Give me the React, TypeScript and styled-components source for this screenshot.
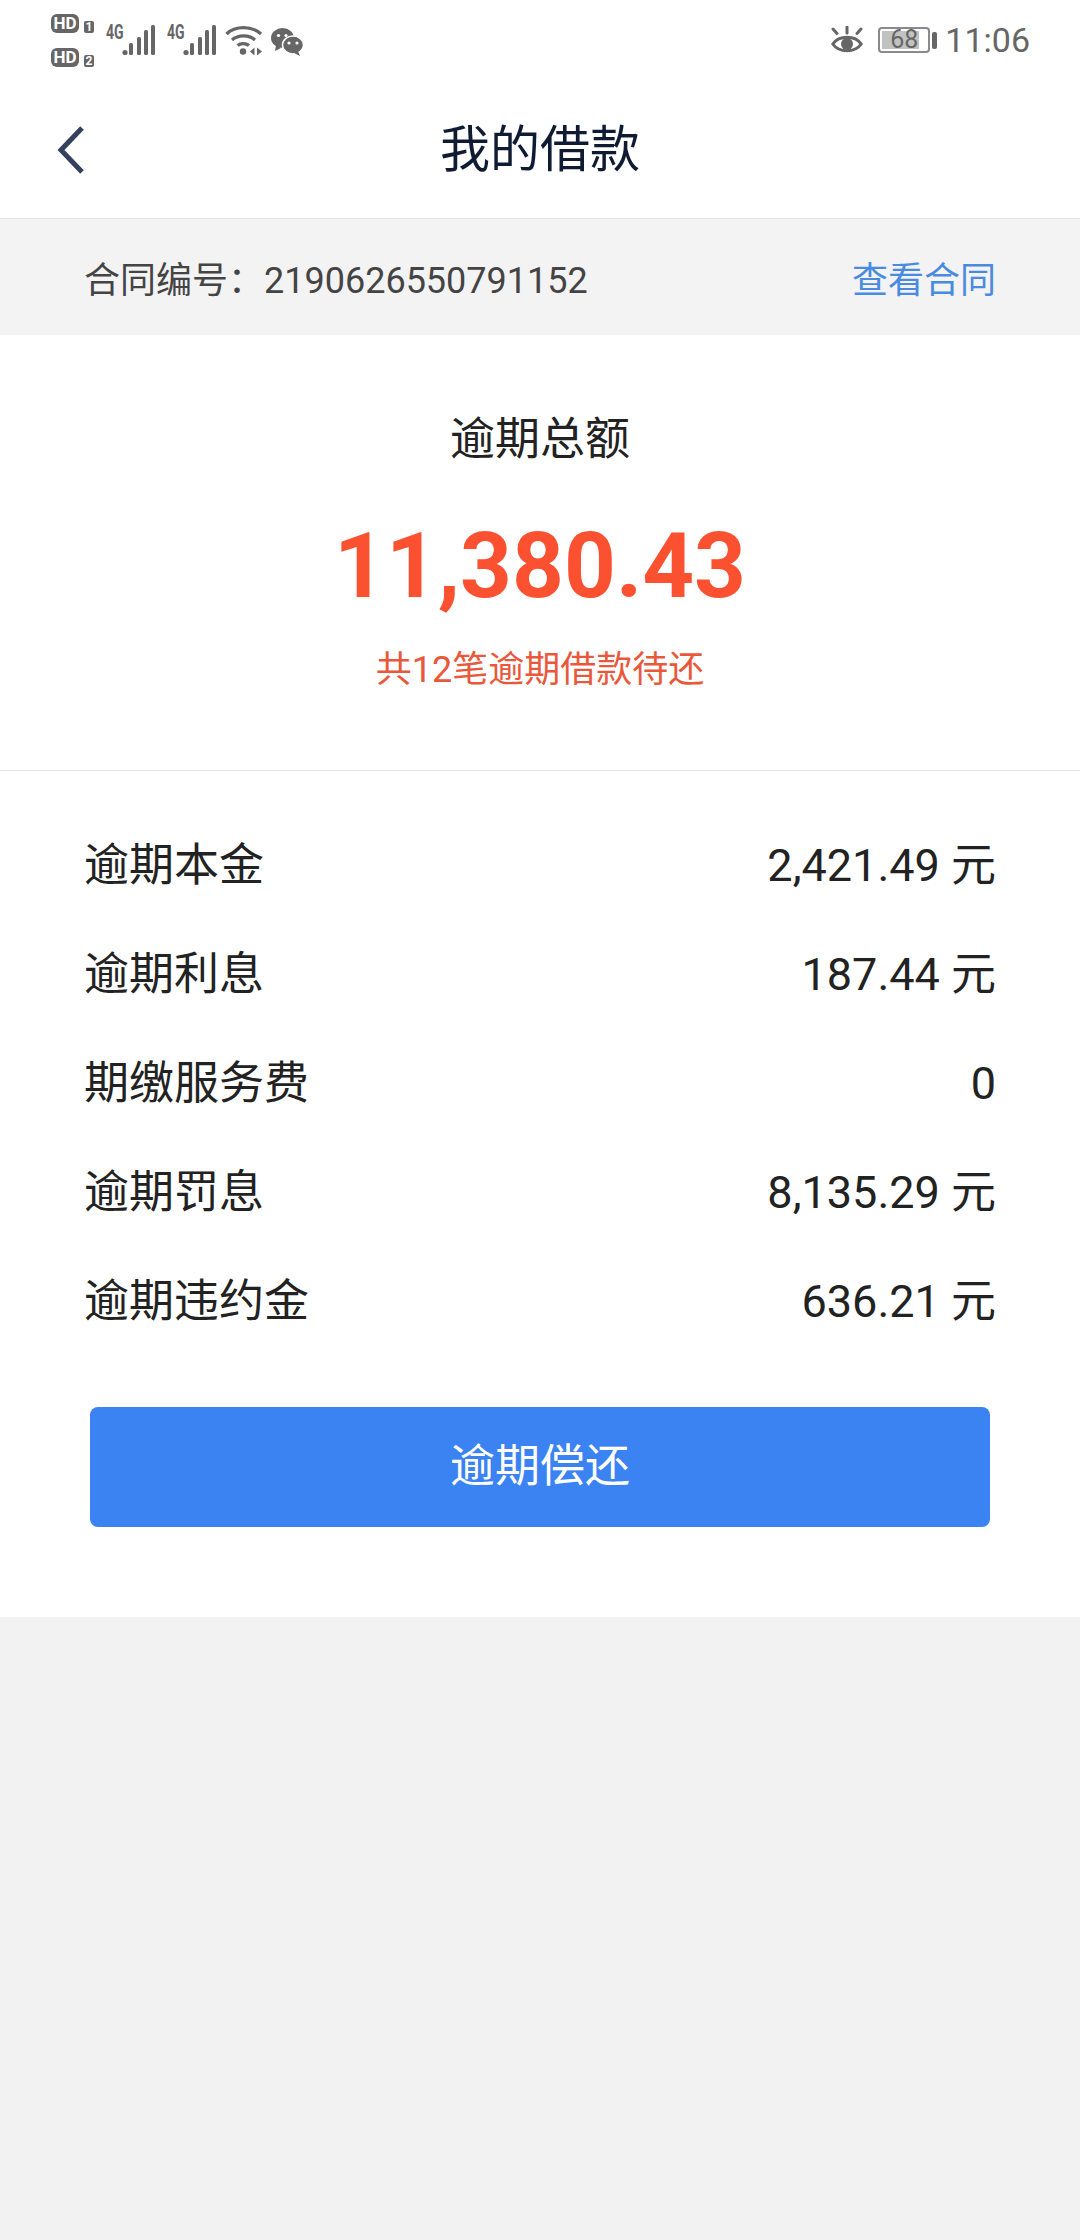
import React from "react";
import styled, { createGlobalStyle } from "styled-components";

const Global = createGlobalStyle`
  html, body { margin: 0; padding: 0; background: #f2f2f3; }
  body { font-family: Roboto, "Noto Sans CJK SC", sans-serif; }
`;
const Page = styled.div`
  width: 1080px;
  height: 2240px;
  background: #f2f2f3;
  overflow: hidden;
`;
const StatusBar = styled.div`
  height: 80px;
  padding: 0 50px 0 51px;
  background: #fff;
  display: flex;
  align-items: center;
  justify-content: space-between;
  color: #666;
`;
const StatusGroup = styled.div`
  display: flex;
  align-items: center;
`;
const SimColumn = styled.div`
  display: flex;
  flex-direction: column;
  gap: 15px;
  margin-right: 12px;
`;
const SimRow = styled.div`
  display: flex;
  align-items: flex-end;
  gap: 5px;
`;
const HdTag = styled.span`
  width: 28px;
  height: 19px;
  border-radius: 6px;
  background: #666;
  color: #fff;
  font: 700 17px/19px Roboto, sans-serif;
  text-align: center;
`;
const SimNo = styled.span`
  width: 10px;
  height: 12px;
  border-radius: 2px;
  background: #666;
  color: #fff;
  font: 700 12px/12px Roboto, sans-serif;
  text-align: center;
`;
const Signal = styled.div<{ $gap: number }>`
  position: relative;
  width: 50px;
  height: 32px;
  margin-right: ${(p) => p.$gap}px;
`;
const NetLabel = styled.span`
  position: absolute;
  left: 0;
  top: -1px;
  font: 700 20px/18px Roboto, sans-serif;
  color: #666;
  transform: scaleX(0.7);
  transform-origin: left top;
`;
const BarsIcon = styled.svg`
  position: absolute;
  left: 0;
  top: 0;
`;
const WechatIcon = styled.svg`
  margin-left: 8px;
  margin-top: 4px;
`;
const EyeIcon = styled.svg`
  margin-top: 2px;
`;
const BatteryBox = styled.div`
  position: relative;
  width: 52px;
  height: 26px;
  box-sizing: border-box;
  border: 2px solid #8a8a8a;
  border-radius: 4px;
  padding: 2px;
  margin-left: 15px;
`;
const BatteryFill = styled.div`
  height: 100%;
  background: #c2c2c2;
`;
const BatteryText = styled.span`
  position: absolute;
  inset: 0;
  text-align: center;
  font: 400 25px/22px Roboto, sans-serif;
  color: #666;
`;
const BatteryCap = styled.div`
  width: 5px;
  height: 17px;
  margin-left: 2px;
  border-radius: 2px;
  background: #666;
`;
const Clock = styled.span`
  margin-left: 8px;
  font: 400 34px/40px Roboto, sans-serif;
  color: #666;
`;
const NavBar = styled.header`
  position: relative;
  height: 139px;
  box-sizing: border-box;
  padding-top: 2px;
  background: #fff;
  border-bottom: 1px solid #e4e4e4;
  display: flex;
  align-items: center;
  justify-content: center;
`;
const NavTitle = styled.h1`
  margin: 0;
  font: 400 50px/60px Roboto, "Noto Sans CJK SC", sans-serif;
  color: #0f1a33;
`;
const BackButton = styled.svg`
  position: absolute;
  left: 56px;
  top: 46px;
`;
const ContractBar = styled.div`
  height: 116px;
  padding: 0 84px;
  display: flex;
  align-items: center;
  justify-content: space-between;
  background: #f3f3f3;
`;
const ContractText = styled.span`
  font-size: 36px;
  color: #444;
`;
const ContractLink = styled.a`
  font-size: 36px;
  color: #4a8ae0;
`;
const Card = styled.section`
  background: #fff;
`;
const Summary = styled.div`
  height: 436px;
  box-sizing: border-box;
  padding-top: 77px;
  border-bottom: 1px solid #e6e6e6;
  display: flex;
  flex-direction: column;
  align-items: center;
`;
const SummaryTitle = styled.div`
  font-size: 45px;
  line-height: 56px;
  color: #222;
`;
const Amount = styled.div`
  margin-top: 42px;
  font-size: 90.5px;
  line-height: 112px;
  font-weight: 700;
  color: #fb5131;
`;
const SummaryNote = styled.div`
  margin-top: 25px;
  font-size: 36px;
  line-height: 46px;
  color: #e9583a;
`;
const Rows = styled.div`
  padding: 40px 84px 0;
`;
const Row = styled.div`
  height: 109px;
  display: flex;
  align-items: center;
  justify-content: space-between;
  font-size: 45px;
  line-height: 56px;
  color: #222;
`;
const PayButton = styled.button`
  display: block;
  width: 900px;
  height: 120px;
  margin: 51px auto 0;
  border: 0;
  border-radius: 8px;
  background: #3b82f3;
  color: #fff;
  font: 400 45px/60px Roboto, "Noto Sans CJK SC", sans-serif;
`;
const ButtonWrap = styled.div`
  padding-bottom: 90px;
`;

const rows: [string, string][] = [
  ["逾期本金", "2,421.49 元"],
  ["逾期利息", "187.44 元"],
  ["期缴服务费", "0"],
  ["逾期罚息", "8,135.29 元"],
  ["逾期违约金", "636.21 元"],
];

const Bars = () => (
  <BarsIcon width="50" height="32" viewBox="0 0 50 32">
    <circle cx="19" cy="28.5" r="2.6" fill="#666" />
    <rect x="23" y="19" width="4" height="12" rx="1.5" fill="#666" />
    <rect x="31" y="13" width="4" height="18" rx="1.5" fill="#666" />
    <rect x="38" y="6" width="4" height="25" rx="1.5" fill="#666" />
    <rect x="45" y="1" width="4" height="30" rx="1.5" fill="#666" />
  </BarsIcon>
);

export default function App() {
  return (
    <Page>
      <Global />
      <StatusBar>
        <StatusGroup>
          <SimColumn>
            <SimRow><HdTag>HD</HdTag><SimNo>1</SimNo></SimRow>
            <SimRow><HdTag>HD</HdTag><SimNo>2</SimNo></SimRow>
          </SimColumn>
          <Signal $gap={11}><NetLabel>4G</NetLabel><Bars /></Signal>
          <Signal $gap={8}><NetLabel>4G</NetLabel><Bars /></Signal>
          <svg width="38" height="30" viewBox="0 0 38 30">
            <path d="M1.5 9 C10 0.5 27 0.5 36 9" fill="none" stroke="#666" strokeWidth="3.2" />
            <path d="M7 15 C13 9.5 24 9.5 30 15" fill="none" stroke="#666" strokeWidth="3.2" />
            <path d="M12.5 20.5 C15.5 18 21 18 24 20.5" fill="none" stroke="#666" strokeWidth="3.2" />
            <circle cx="18" cy="26.5" r="3.2" fill="#666" />
            <path d="M29.5 22.5 v8 l-4.5 -4 z M32 22.5 v8 l5 -4 z" fill="#666" />
          </svg>
          <WechatIcon width="33" height="28" viewBox="0 0 33 28">
            <ellipse cx="11.5" cy="10" rx="11.5" ry="10" fill="#666" />
            <path d="M5 17 l-1 6 6 -3 z" fill="#666" />
            <circle cx="7.5" cy="7.5" r="1.6" fill="#fff" />
            <circle cx="15" cy="7.5" r="1.6" fill="#fff" />
            <ellipse cx="22" cy="17" rx="10.5" ry="9" fill="#666" stroke="#fff" strokeWidth="1.5" />
            <path d="M27 23 l2 5 -6 -3 z" fill="#666" />
            <circle cx="18" cy="15" r="1.6" fill="#fff" />
            <circle cx="26" cy="15" r="1.6" fill="#fff" />
          </WechatIcon>
        </StatusGroup>
        <StatusGroup>
          <EyeIcon width="32" height="30" viewBox="0 0 32 30">
            <path d="M1.8 18 C8 9 24 9 30.2 18 C24 27 8 27 1.8 18 Z" fill="none" stroke="#666" strokeWidth="3" />
            <circle cx="16" cy="18" r="6" fill="#666" />
            <path d="M16 1 v6 M2 3 l4 4.5 M30 3 l-4 4.5" stroke="#666" strokeWidth="3" strokeLinecap="round" />
          </EyeIcon>
          <BatteryBox>
            <BatteryFill style={{ width: "84%" }} />
            <BatteryText>68</BatteryText>
          </BatteryBox>
          <BatteryCap />
          <Clock>11:06</Clock>
        </StatusGroup>
      </StatusBar>
      <NavBar>
        <BackButton width="28" height="48" viewBox="0 0 28 48">
          <path d="M26 2 L5 24 L26 46" fill="none" stroke="#33415f" strokeWidth="5" />
        </BackButton>
        <NavTitle>我的借款</NavTitle>
      </NavBar>
      <ContractBar>
        <ContractText>合同编号：2190626550791152</ContractText>
        <ContractLink>查看合同</ContractLink>
      </ContractBar>
      <Card>
        <Summary>
          <SummaryTitle>逾期总额</SummaryTitle>
          <Amount>11,380.43</Amount>
          <SummaryNote>共12笔逾期借款待还</SummaryNote>
        </Summary>
        <Rows>
          {rows.map(([label, value]) => (
            <Row key={label}><span>{label}</span><span>{value}</span></Row>
          ))}
        </Rows>
        <ButtonWrap>
          <PayButton>逾期偿还</PayButton>
        </ButtonWrap>
      </Card>
    </Page>
  );
}
